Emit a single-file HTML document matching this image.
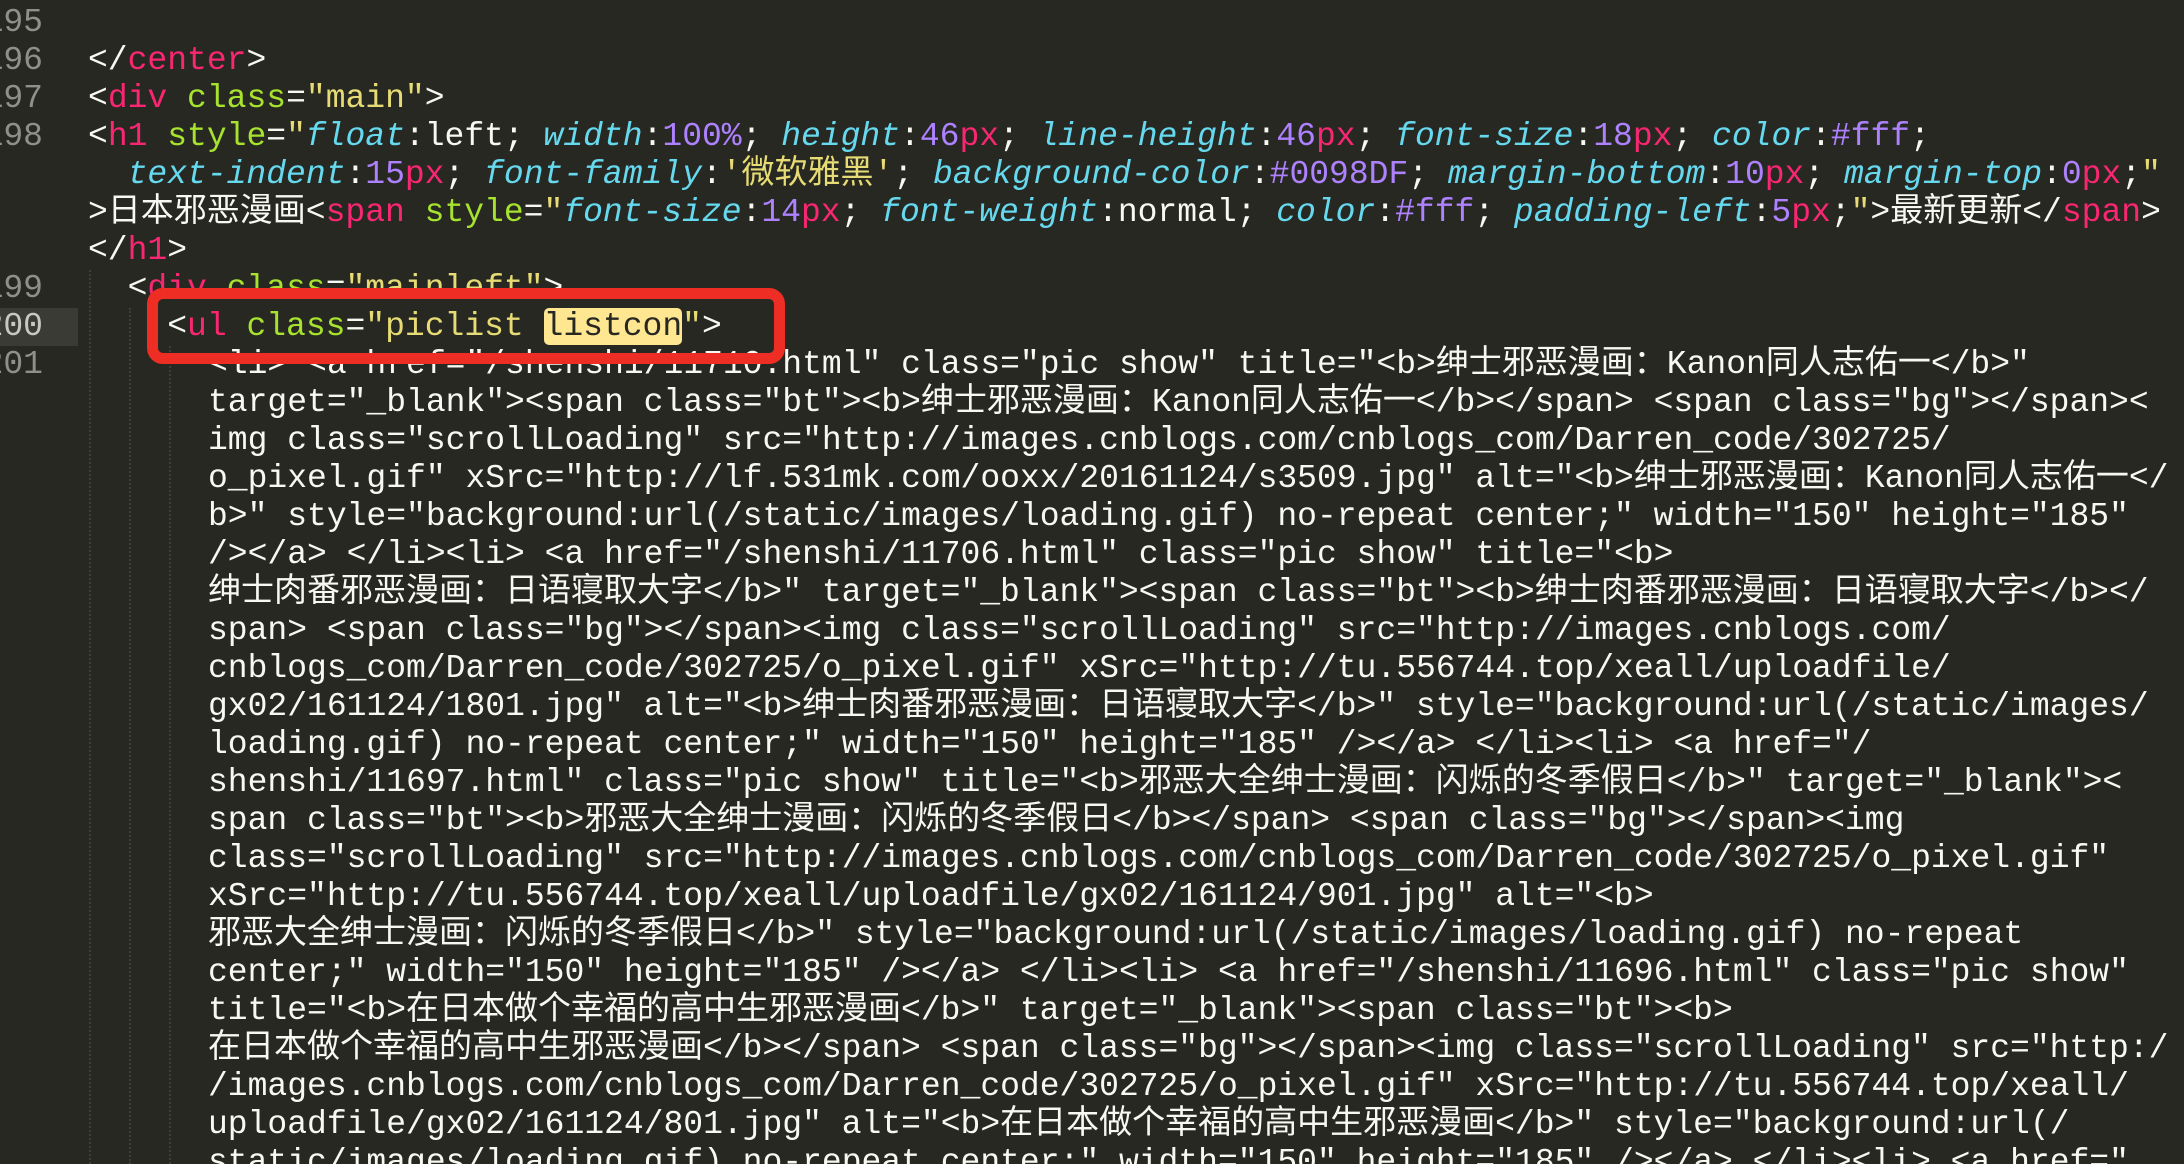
<!DOCTYPE html>
<html><head><meta charset="utf-8"><style>
html,body{margin:0;padding:0;background:#272822;width:2184px;height:1164px;overflow:hidden;position:relative}
.r{position:absolute;left:88px;height:38px;line-height:38px;white-space:pre;font-family:"Liberation Mono","Noto Sans CJK SC",monospace;font-size:33px;color:#f8f8f2;letter-spacing:0}
.ln{position:absolute;left:-17px;width:60px;text-align:right;height:38px;line-height:38px;font-family:"Liberation Mono",monospace;font-size:33px;color:#8f908a;white-space:pre;overflow:visible}
.t{color:#f92672}.a{color:#a6e22e}.s{color:#e6db74}.p{color:#66d9ef;font-style:italic}.n{color:#ae81ff}
.g{position:absolute;width:0;border-left:2px dotted #3e3f39}
</style></head><body>
<div style="position:absolute;left:0;top:308px;width:78px;height:38px;background:#3a3b35"></div>
<div class="g" style="left:89px;top:270px;height:894px"></div>
<div class="g" style="left:129px;top:308px;height:856px"></div>
<div class="g" style="left:169px;top:346px;height:818px"></div>

<div class="ln" style="top:4px">195</div>
<div class="ln" style="top:42px">196</div>
<div class="ln" style="top:80px">197</div>
<div class="ln" style="top:118px">198</div>
<div class="ln" style="top:270px">199</div>
<div class="ln" style="top:308px;color:#c8c8c0">200</div>
<div class="ln" style="top:346px">201</div>

<div class="r" style="top:42px">&lt;/<span class="t">center</span>&gt;</div>
<div class="r" style="top:80px">&lt;<span class="t">div</span> <span class="a">class</span>=<span class="s">"main"</span>&gt;</div>
<div class="r" style="top:118px">&lt;<span class="t">h1</span> <span class="a">style</span>=<span class="s">"</span><span class="p">float</span>:left; <span class="p">width</span>:<span class="n">100%</span>; <span class="p">height</span>:<span class="n">46</span><span class="t">px</span>; <span class="p">line-height</span>:<span class="n">46</span><span class="t">px</span>; <span class="p">font-size</span>:<span class="n">18</span><span class="t">px</span>; <span class="p">color</span>:<span class="n">#fff</span>;</div>
<div class="r" style="top:156px">  <span class="p">text-indent</span>:<span class="n">15</span><span class="t">px</span>; <span class="p">font-family</span>:<span class="s">'微软雅黑'</span>; <span class="p">background-color</span>:<span class="n">#0098DF</span>; <span class="p">margin-bottom</span>:<span class="n">10</span><span class="t">px</span>; <span class="p">margin-top</span>:<span class="n">0</span><span class="t">px</span>;<span class="s">"</span></div>
<div class="r" style="top:194px">&gt;日本邪恶漫画&lt;<span class="t">span</span> <span class="a">style</span>=<span class="s">"</span><span class="p">font-size</span>:<span class="n">14</span><span class="t">px</span>; <span class="p">font-weight</span>:normal; <span class="p">color</span>:<span class="n">#fff</span>; <span class="p">padding-left</span>:<span class="n">5</span><span class="t">px</span>;<span class="s">"</span>&gt;最新更新&lt;/<span class="t">span</span>&gt;</div>
<div class="r" style="top:232px">&lt;/<span class="t">h1</span>&gt;</div>
<div class="r" style="top:270px">  &lt;<span class="t">div</span> <span class="a">class</span>=<span class="s">"mainleft"</span>&gt;</div>
<div class="r" style="top:308px">    &lt;<span class="t">ul</span> <span class="a">class</span>=<span class="s">"piclist <span style="background:#ffe792;color:#272822;border-radius:5px">listcon</span>"</span>&gt;</div>

<div class="r" style="top:346px;left:208px">&lt;li&gt; &lt;a href="/shenshi/11710.html" class="pic show" title="&lt;b&gt;绅士邪恶漫画：Kanon同人志佑一&lt;/b&gt;"</div>
<div class="r" style="top:384px;left:208px">target="_blank"&gt;&lt;span class="bt"&gt;&lt;b&gt;绅士邪恶漫画：Kanon同人志佑一&lt;/b&gt;&lt;/span&gt; &lt;span class="bg"&gt;&lt;/span&gt;&lt;</div>
<div class="r" style="top:422px;left:208px">img class="scrollLoading" src="http://images.cnblogs.com/cnblogs_com/Darren_code/302725/</div>
<div class="r" style="top:460px;left:208px">o_pixel.gif" xSrc="http://lf.531mk.com/ooxx/20161124/s3509.jpg" alt="&lt;b&gt;绅士邪恶漫画：Kanon同人志佑一&lt;/</div>
<div class="r" style="top:498px;left:208px">b&gt;" style="background:url(/static/images/loading.gif) no-repeat center;" width="150" height="185"</div>
<div class="r" style="top:536px;left:208px">/&gt;&lt;/a&gt; &lt;/li&gt;&lt;li&gt; &lt;a href="/shenshi/11706.html" class="pic show" title="&lt;b&gt;</div>
<div class="r" style="top:574px;left:208px">绅士肉番邪恶漫画：日语寝取大字&lt;/b&gt;" target="_blank"&gt;&lt;span class="bt"&gt;&lt;b&gt;绅士肉番邪恶漫画：日语寝取大字&lt;/b&gt;&lt;/</div>
<div class="r" style="top:612px;left:208px">span&gt; &lt;span class="bg"&gt;&lt;/span&gt;&lt;img class="scrollLoading" src="http://images.cnblogs.com/</div>
<div class="r" style="top:650px;left:208px">cnblogs_com/Darren_code/302725/o_pixel.gif" xSrc="http://tu.556744.top/xeall/uploadfile/</div>
<div class="r" style="top:688px;left:208px">gx02/161124/1801.jpg" alt="&lt;b&gt;绅士肉番邪恶漫画：日语寝取大字&lt;/b&gt;" style="background:url(/static/images/</div>
<div class="r" style="top:726px;left:208px">loading.gif) no-repeat center;" width="150" height="185" /&gt;&lt;/a&gt; &lt;/li&gt;&lt;li&gt; &lt;a href="/</div>
<div class="r" style="top:764px;left:208px">shenshi/11697.html" class="pic show" title="&lt;b&gt;邪恶大全绅士漫画：闪烁的冬季假日&lt;/b&gt;" target="_blank"&gt;&lt;</div>
<div class="r" style="top:802px;left:208px">span class="bt"&gt;&lt;b&gt;邪恶大全绅士漫画：闪烁的冬季假日&lt;/b&gt;&lt;/span&gt; &lt;span class="bg"&gt;&lt;/span&gt;&lt;img</div>
<div class="r" style="top:840px;left:208px">class="scrollLoading" src="http://images.cnblogs.com/cnblogs_com/Darren_code/302725/o_pixel.gif"</div>
<div class="r" style="top:878px;left:208px">xSrc="http://tu.556744.top/xeall/uploadfile/gx02/161124/901.jpg" alt="&lt;b&gt;</div>
<div class="r" style="top:916px;left:208px">邪恶大全绅士漫画：闪烁的冬季假日&lt;/b&gt;" style="background:url(/static/images/loading.gif) no-repeat</div>
<div class="r" style="top:954px;left:208px">center;" width="150" height="185" /&gt;&lt;/a&gt; &lt;/li&gt;&lt;li&gt; &lt;a href="/shenshi/11696.html" class="pic show"</div>
<div class="r" style="top:992px;left:208px">title="&lt;b&gt;在日本做个幸福的高中生邪恶漫画&lt;/b&gt;" target="_blank"&gt;&lt;span class="bt"&gt;&lt;b&gt;</div>
<div class="r" style="top:1030px;left:208px">在日本做个幸福的高中生邪恶漫画&lt;/b&gt;&lt;/span&gt; &lt;span class="bg"&gt;&lt;/span&gt;&lt;img class="scrollLoading" src="http:/</div>
<div class="r" style="top:1068px;left:208px">/images.cnblogs.com/cnblogs_com/Darren_code/302725/o_pixel.gif" xSrc="http://tu.556744.top/xeall/</div>
<div class="r" style="top:1106px;left:208px">uploadfile/gx02/161124/801.jpg" alt="&lt;b&gt;在日本做个幸福的高中生邪恶漫画&lt;/b&gt;" style="background:url(/</div>
<div class="r" style="top:1144px;left:208px">static/images/loading.gif) no-repeat center;" width="150" height="185" /&gt;&lt;/a&gt; &lt;/li&gt;&lt;li&gt; &lt;a href="</div>

<div style="position:absolute;left:147px;top:288px;width:616px;height:54px;border:11px solid #ee2e24;border-radius:16px"></div>
</body></html>
